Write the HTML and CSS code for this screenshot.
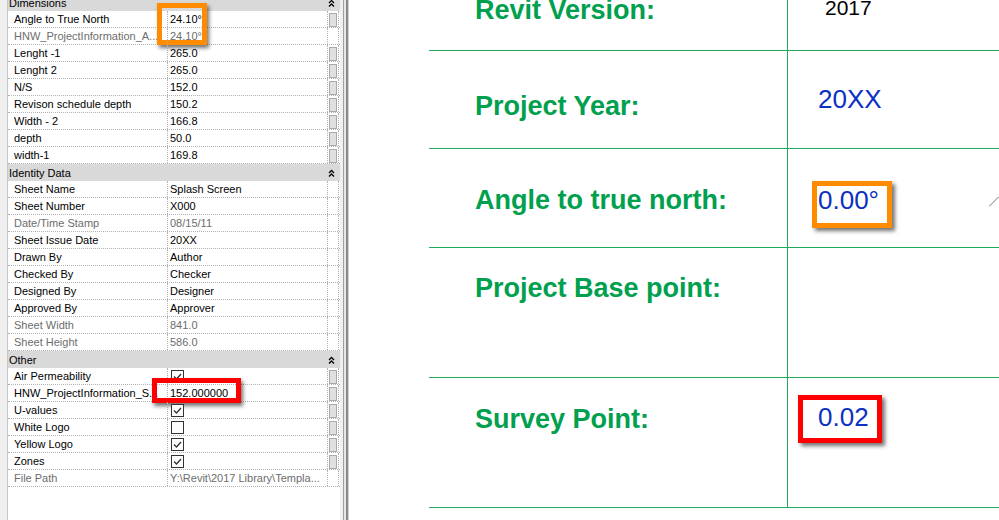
FILE: index.html
```html
<!DOCTYPE html>
<html lang="en">
<head>
    <meta charset="UTF-8">
    <title>Project Information</title>
    <link rel="stylesheet" href="styles.css">
</head>
<body>
    <!-- Properties palette -->
    <div class="panel">
        <div class="props">
            <div class="group"><span>Dimensions</span><svg class="fold" width="7" height="8" viewBox="0 0 7 8"><path d="M1 4 L3.5 1.5 L6 4 M1 7.5 L3.5 5 L6 7.5"/></svg></div>
            <div class="row">
                <div class="name">Angle to True North</div>
                <div class="value">24.10°<span class="mark mark-orange"></span></div>
                <div class="btn"><i></i></div>
            </div>
            <div class="row muted">
                <div class="name">HNW_ProjectInformation_A...</div>
                <div class="value">24.10°</div>
                <div class="btn"></div>
            </div>
            <div class="row">
                <div class="name">Lenght -1</div>
                <div class="value">265.0</div>
                <div class="btn"><i></i></div>
            </div>
            <div class="row">
                <div class="name">Lenght 2</div>
                <div class="value">265.0</div>
                <div class="btn"><i></i></div>
            </div>
            <div class="row">
                <div class="name">N/S</div>
                <div class="value">152.0</div>
                <div class="btn"><i></i></div>
            </div>
            <div class="row">
                <div class="name">Revison schedule depth</div>
                <div class="value">150.2</div>
                <div class="btn"><i></i></div>
            </div>
            <div class="row">
                <div class="name">Width - 2</div>
                <div class="value">166.8</div>
                <div class="btn"><i></i></div>
            </div>
            <div class="row">
                <div class="name">depth</div>
                <div class="value">50.0</div>
                <div class="btn"><i></i></div>
            </div>
            <div class="row">
                <div class="name">width-1</div>
                <div class="value">169.8</div>
                <div class="btn"><i></i></div>
            </div>

            <div class="group"><span>Identity Data</span><svg class="fold" width="7" height="8" viewBox="0 0 7 8"><path d="M1 4 L3.5 1.5 L6 4 M1 7.5 L3.5 5 L6 7.5"/></svg></div>
            <div class="row">
                <div class="name">Sheet Name</div>
                <div class="value">Splash Screen</div>
                <div class="btn"></div>
            </div>
            <div class="row">
                <div class="name">Sheet Number</div>
                <div class="value">X000</div>
                <div class="btn"></div>
            </div>
            <div class="row muted">
                <div class="name">Date/Time Stamp</div>
                <div class="value">08/15/11</div>
                <div class="btn"></div>
            </div>
            <div class="row">
                <div class="name">Sheet Issue Date</div>
                <div class="value">20XX</div>
                <div class="btn"></div>
            </div>
            <div class="row">
                <div class="name">Drawn By</div>
                <div class="value">Author</div>
                <div class="btn"></div>
            </div>
            <div class="row">
                <div class="name">Checked By</div>
                <div class="value">Checker</div>
                <div class="btn"></div>
            </div>
            <div class="row">
                <div class="name">Designed By</div>
                <div class="value">Designer</div>
                <div class="btn"></div>
            </div>
            <div class="row">
                <div class="name">Approved By</div>
                <div class="value">Approver</div>
                <div class="btn"></div>
            </div>
            <div class="row muted">
                <div class="name">Sheet Width</div>
                <div class="value">841.0</div>
                <div class="btn"></div>
            </div>
            <div class="row muted">
                <div class="name">Sheet Height</div>
                <div class="value">586.0</div>
                <div class="btn"></div>
            </div>

            <div class="group"><span>Other</span><svg class="fold" width="7" height="8" viewBox="0 0 7 8"><path d="M1 4 L3.5 1.5 L6 4 M1 7.5 L3.5 5 L6 7.5"/></svg></div>
            <div class="row">
                <div class="name">Air Permeability</div>
                <div class="value"><span class="check"><svg width="11" height="11" viewBox="0 0 11 11"><path d="M2 5.5 L4.5 8 L9 3"/></svg></span></div>
                <div class="btn"><i></i></div>
            </div>
            <div class="row">
                <div class="name">HNW_ProjectInformation_S...</div>
                <div class="value">152.000000<span class="mark mark-red"></span></div>
                <div class="btn"><i></i></div>
            </div>
            <div class="row">
                <div class="name">U-values</div>
                <div class="value"><span class="check"><svg width="11" height="11" viewBox="0 0 11 11"><path d="M2 5.5 L4.5 8 L9 3"/></svg></span></div>
                <div class="btn"><i></i></div>
            </div>
            <div class="row">
                <div class="name">White Logo</div>
                <div class="value"><span class="check"></span></div>
                <div class="btn"><i></i></div>
            </div>
            <div class="row">
                <div class="name">Yellow Logo</div>
                <div class="value"><span class="check"><svg width="11" height="11" viewBox="0 0 11 11"><path d="M2 5.5 L4.5 8 L9 3"/></svg></span></div>
                <div class="btn"><i></i></div>
            </div>
            <div class="row">
                <div class="name">Zones</div>
                <div class="value"><span class="check"><svg width="11" height="11" viewBox="0 0 11 11"><path d="M2 5.5 L4.5 8 L9 3"/></svg></span></div>
                <div class="btn"><i></i></div>
            </div>
            <div class="row muted">
                <div class="name">File Path</div>
                <div class="value">Y:\Revit\2017 Library\Templa...</div>
                <div class="btn"></div>
            </div>
        </div>
    </div>
    <div class="splitter"></div>

    <!-- Sheet title block -->
    <div class="sheet">
        <div class="line line-version">
            <div class="label">Revit Version:</div>
            <div class="field"><span class="plain">2017</span></div>
        </div>
        <div class="line line-year">
            <div class="label">Project Year:</div>
            <div class="field"><span class="num">20XX</span></div>
        </div>
        <div class="line line-angle">
            <div class="label">Angle to true north:</div>
            <div class="field">
                <span class="num box box-orange">0.00°</span>
                <svg class="arrow" width="10" height="11" viewBox="0 0 10 11"><path d="M0 10.5 L10 0.5"/></svg>
            </div>
        </div>
        <div class="line line-base">
            <div class="label">Project Base point:</div>
            <div class="field"></div>
        </div>
        <div class="line line-survey">
            <div class="label">Survey Point:</div>
            <div class="field"><span class="num box box-red">0.02</span></div>
        </div>
    </div>
</body>
</html>
```

FILE: styles.css
```css
/* Page */
body {
    margin: 0;
    display: flex;
    height: 520px;
    overflow: hidden;
    background: #ffffff;
    font-family: "Liberation Sans", Arial, sans-serif;
}

/* Properties palette */
.panel {
    width: 340px;
    flex: none;
    box-sizing: border-box;
    padding-left: 7px;
    background: #f0f0f0;
}

.props {
    margin-top: -6px;
    height: 526px;
    background: #ffffff;
    border-left: 1px solid #c6c6c6;
    font-size: 11px;
    color: #000000;
}

.group {
    display: flex;
    justify-content: space-between;
    align-items: center;
    height: 17px;
    padding: 0 5px 0 1px;
    background: #d9d9d9;
}

.fold path {
    fill: none;
    stroke: #000000;
    stroke-width: 1.3;
}

.row {
    display: grid;
    grid-template-columns: 159px 160px 12px;
    height: 17px;
    box-sizing: border-box;
    border-bottom: 1px dotted #b2b2b2;
    line-height: 16px;
}

.row > div {
    white-space: nowrap;
}

.name {
    padding-left: 6px;
    overflow: hidden;
}

.value {
    position: relative;
    padding-left: 2px;
    border-left: 1px dotted #b2b2b2;
}

.muted {
    color: #6d6d6d;
}

.btn {
    border-left: 1px dotted #b2b2b2;
    border-right: 1px dotted #b2b2b2;
}

.btn i {
    display: block;
    width: 8px;
    height: 14px;
    margin: 2px 0 0 1px;
    box-sizing: border-box;
    border: 1px solid #a9a9a9;
    background: #e0e0e0;
}

.check {
    display: block;
    width: 13px;
    height: 13px;
    margin: 2px 0 0 1px;
    box-sizing: border-box;
    border: 1px solid #333333;
    background: #ffffff;
}

.check svg {
    display: block;
}

.check path {
    fill: none;
    stroke: #333333;
    stroke-width: 1.3;
}

/* Annotation boxes */
.mark {
    position: absolute;
    box-sizing: border-box;
    border: 5px solid;
    box-shadow: 2px 3px 4px rgba(0, 0, 0, 0.55);
}

.mark-orange {
    left: -11px;
    top: -8px;
    width: 50px;
    height: 42px;
    border-color: #ff8c00;
}

.mark-red {
    left: -16px;
    top: -7px;
    width: 89px;
    height: 25px;
    border-color: #ff0000;
}

/* Splitter between palette and view */
.splitter {
    width: 9px;
    flex: none;
    background: linear-gradient(to right, #f0f0f0 0 3px, #a0a0a0 3px 4px, #e6e6e6 4px 6px, #8a8a8a 6px 8px, #d4d4d4 8px 9px);
}

/* Sheet */
.sheet {
    flex: 1;
    align-self: flex-start;
    height: 508px;
    overflow: hidden;
    padding-left: 80px;
}

.line {
    display: grid;
    grid-template-columns: 358px 1fr;
    box-sizing: border-box;
    border-bottom: 1px solid #1fa95d;
}

.label {
    padding-left: 46px;
    font-size: 27px;
    font-weight: bold;
    line-height: 31px;
    color: #00a04e;
    white-space: nowrap;
}

.field {
    position: relative;
    border-left: 1px solid #1fa95d;
}

.plain {
    display: inline-block;
    padding: 44px 0 0 37px;
    font-size: 21px;
    line-height: 24px;
    color: #000000;
}

.num {
    display: inline-block;
    font-size: 26px;
    line-height: 30px;
    color: #0b30c2;
}

.box {
    border: 5px solid;
    box-shadow: 3px 3px 4px rgba(0, 0, 0, 0.55);
}

.line-version {
    height: 99px;
    margin-top: -48px;
}

.line-version .label { padding-top: 43px; }

.line-year { height: 98px; }
.line-year .label { padding-top: 40px; }
.line-year .num { padding: 33px 0 0 30px; }

.line-angle { height: 99px; }
.line-angle .label { padding-top: 36px; }

.box-orange {
    margin: 32px 0 0 24px;
    padding: 1px 8px 10px 1px;
    line-height: 26px;
    border-color: #ff8c00;
}

.arrow {
    position: absolute;
    left: 201px;
    top: 47px;
}

.arrow path {
    stroke: #777777;
    stroke-width: 1;
}

.line-base { height: 130px; }
.line-base .label { padding-top: 25px; }

.line-survey { height: 130px; }
.line-survey .label { padding-top: 26px; }

.box-red {
    margin: 17px 0 0 10px;
    padding: 2px 8px 6px 15px;
    border-color: #ff0000;
}
```
